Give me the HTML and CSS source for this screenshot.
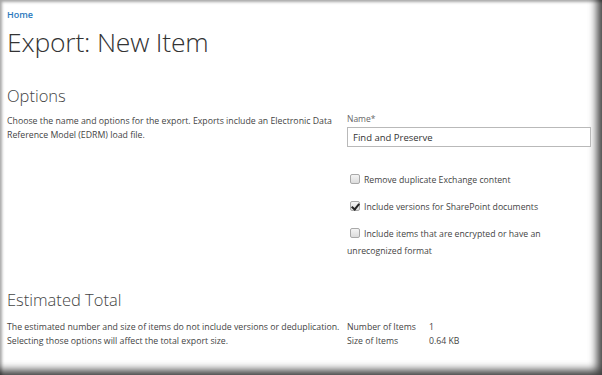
FILE: index.html
```html
<!DOCTYPE html>
<html lang="en">
<head>
    <meta charset="UTF-8">
    <title>Export: New Item</title>
    <link rel="stylesheet" href="styles.css">
</head>
<body>
    <div class="frame">
        <a class="crumb" href="#">Home</a>
        <h1>Export: New Item</h1>

        <section class="section options">
            <h2>Options</h2>
            <div class="columns">
                <p class="desc">Choose the name and options for the export. Exports include an Electronic Data Reference Model (EDRM) load file.</p>
                <div class="fields">
                    <label class="field-label" for="name">Name*</label>
                    <input id="name" class="text-input" type="text" value="Find and Preserve">

                    <label class="check"><span class="box"></span>Remove duplicate Exchange content</label>
                    <label class="check"><span class="box checked"></span>Include versions for SharePoint documents</label>
                    <label class="check wrap"><span class="box"></span>Include items that are encrypted or have an unrecognized format</label>
                </div>
            </div>
        </section>

        <section class="section totals">
            <h2>Estimated Total</h2>
            <div class="columns">
                <p class="desc">The estimated number and size of items do not include versions or deduplication. Selecting those options will affect the total export size.</p>
                <div class="stats">
                    <span>Number of Items</span><span>1</span>
                    <span>Size of Items</span><span>0.64 KB</span>
                </div>
            </div>
        </section>
    </div>
</body>
</html>
```

FILE: styles.css
```css
* {
    margin: 0;
    padding: 0;
    box-sizing: border-box;
}

body {
    font-family: 'Open Sans', 'Noto Sans', sans-serif;
    color: #444;
    background: #fff;
}

/* screenshot frame with dark edge shadow */
.frame {
    width: 602px;
    height: 375px;
    padding: 9px 0 0 7px;
    box-shadow:
        inset 3px 3px 3px -1px rgba(0, 0, 0, 0.35),
        inset -9px -9px 8px -4px rgba(0, 0, 0, 0.75);
    overflow: hidden;
}

.crumb {
    display: block;
    font-size: 9px;
    font-weight: 600;
    color: #2b79bd;
    text-decoration: none;
    line-height: 12px;
}

h1 {
    font-size: 26.5px;
    font-weight: 300;
    color: #333;
    line-height: 34px;
    margin-top: 4px;
    letter-spacing: -0.2px;
}

.section h2 {
    font-size: 16.5px;
    font-weight: 300;
    color: #444;
    line-height: 20px;
}

.options {
    margin-top: 27px;
}

.columns {
    display: grid;
    grid-template-columns: 340px 244px;
}

.options .columns {
    margin-top: 8px;
}

.desc {
    font-size: 8.75px;
    line-height: 14px;
    color: #444;
}

.fields {
    display: flex;
    flex-direction: column;
}

.field-label {
    font-size: 8.5px;
    color: #666;
    line-height: 14px;
    margin-top: -2px;
}

.text-input {
    font-family: inherit;
    font-size: 9.5px;
    color: #333;
    height: 20px;
    border: 1px solid #b9b9b9;
    padding: 0 5px;
    margin-top: 1px;
    margin-bottom: 25px;
    outline: none;
}

.check {
    display: block;
    font-size: 8.7px;
    line-height: 17px;
    color: #444;
    margin-bottom: 10px;
}

.check.wrap {
    padding-right: 10px;
}

.box {
    display: inline-block;
    width: 10px;
    height: 10px;
    border: 1px solid #a9a9a9;
    border-radius: 2px;
    background: linear-gradient(#f4f4f4, #dcdcdc);
    margin: 0 4px 0 3px;
    vertical-align: -1px;
    position: relative;
}

.box.checked::after {
    content: '';
    position: absolute;
    left: 2px;
    top: 0;
    width: 3px;
    height: 6px;
    border: solid #222;
    border-width: 0 2px 2px 0;
    transform: rotate(40deg);
}

.totals {
    margin-top: 20px;
}

.totals .columns {
    margin-top: 10px;
}

.stats {
    display: grid;
    grid-template-columns: 82px auto;
    font-size: 8.7px;
    line-height: 14px;
    color: #444;
}
```
